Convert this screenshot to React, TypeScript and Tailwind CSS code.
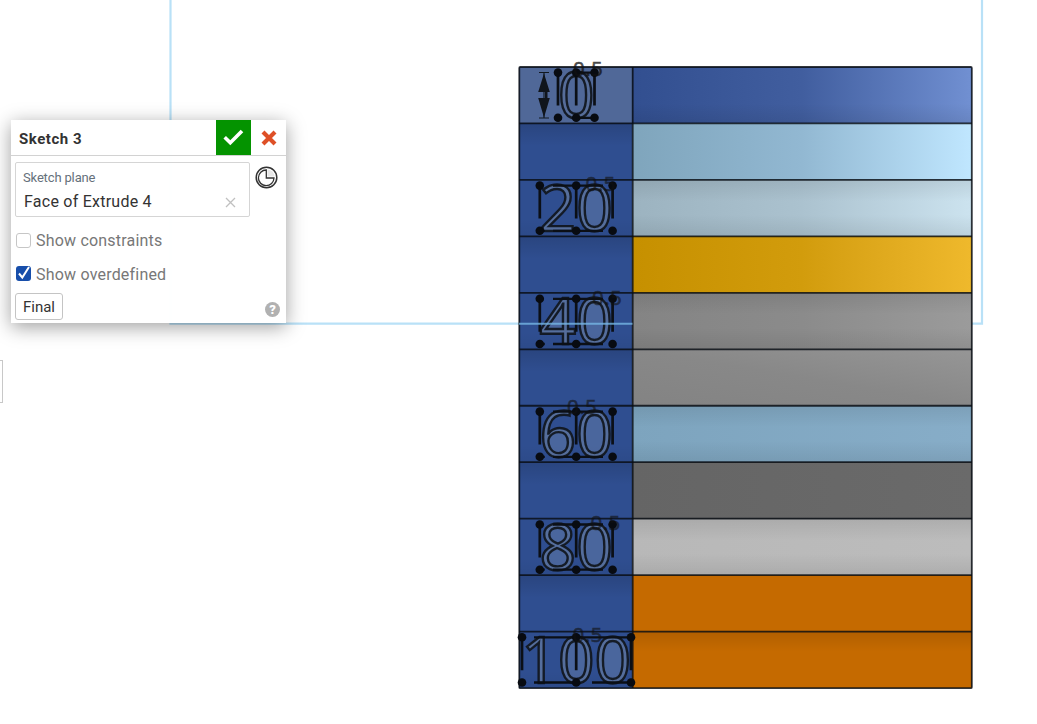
import React from "react";

const rows = [
  { fill: "bg-linear-to-r from-[#324f90] via-[#415e9f] to-[#7190d2]", shade: "bottom", label: "0" },
  { fill: "bg-linear-to-r from-[#7fa5bc] via-[#92b8d2] to-[#c0e7ff]", shade: "none", label: "" },
  { fill: "bg-linear-to-r from-[#9cb3c0] via-[#abc2cf] to-[#cce3ef]", shade: "both", label: "20" },
  { fill: "bg-linear-to-r from-[#c69000] via-[#d29c0c] to-[#efb92c]", shade: "none", label: "" },
  { fill: "bg-linear-to-r from-[#848484] via-[#8b8b8b] to-[#9b9b9b]", shade: "both", label: "40" },
  { fill: "bg-linear-to-tr from-[#838383] via-[#888888] to-[#969696]", shade: "none", label: "" },
  { fill: "bg-linear-to-r from-[#7da4be] to-[#87adc8]", shade: "both", label: "60" },
  { fill: "bg-linear-to-r from-[#656565] to-[#6a6a6a]", shade: "none", label: "" },
  { fill: "bg-linear-to-r from-[#b8b8b8] to-[#bcbcbc]", shade: "both", label: "80" },
  { fill: "bg-[#c56a00]", shade: "none", label: "" },
  { fill: "bg-[#c56a00]", shade: "top", label: "100" },
];

const shades: Record<string, string> = {
  none: "",
  top: "bg-linear-to-b from-black/10 to-transparent to-35%",
  bottom: "bg-linear-to-t from-black/8 to-transparent to-35%",
  both: "bg-[linear-gradient(rgba(0,0,0,0.08),transparent_38%,transparent_62%,rgba(0,0,0,0.08))]",
};

const labels = [
  { text: "0", y: 72.6, left: 558, right: 594.5, dimX: 573, dimY: 76 },
  { text: "20", y: 185.6, left: 539.8, right: 612.6, dimX: 585.5, dimY: 191 },
  { text: "40", y: 298.8, left: 539.8, right: 612.6, dimX: 592, dimY: 304.5 },
  { text: "60", y: 411.6, left: 539.8, right: 612.6, dimX: 567, dimY: 414 },
  { text: "80", y: 524.5, left: 539.8, right: 612.6, dimX: 590.5, dimY: 530 },
  { text: "100", y: 637.3, left: 522, right: 631, dimX: 572.5, dimY: 641.5 },
];

function Counter({ digit, cx, y }: { digit: string; cx: number; y: number }) {
  const fill = { fill: "#8b9fbe", fillOpacity: 0.3 };
  if (digit === "0") return <ellipse cx={cx} cy={y + 22.7} rx="11" ry="20" {...fill} />;
  if (digit === "6") return <ellipse cx={cx + 0.5} cy={y + 31} rx="10" ry="11" {...fill} />;
  if (digit === "4") return <path d={`M${cx + 5} ${y + 7}V${y + 31}H${cx - 12}Z`} {...fill} />;
  if (digit === "8")
    return (
      <g {...fill}>
        <ellipse cx={cx} cy={y + 11} rx="8.5" ry="8.5" />
        <ellipse cx={cx} cy={y + 33.5} rx="9.5" ry="9.5" />
      </g>
    );
  return null;
}

function SketchLabel({ text, y, left, right, dimX, dimY }: (typeof labels)[number]) {
  const mid = 576.2;
  const bottom = y + 45.2;
  const wide = text === "100";
  const single = text === "0";
  return (
    <g>
      {!single &&
        text
          .split("")
          .map((c, i) => <Counter key={i} digit={c} cx={mid + (i - (text.length - 1) / 2) * 36.5} y={y} />)}
      <text
        x={mid}
        y={bottom}
        textAnchor="middle"
        fontFamily="Open Sans"
        fontSize="64"
        fill="#8597ae"
        fillOpacity={single ? 0.12 : 0.45}
        stroke="#10151d"
        strokeOpacity=".93"
        strokeWidth="2.4"
      >
        {text}
      </text>
      <g stroke="#0b0f16" strokeWidth="2.7">
        <path d={`M${left} ${y}V${y + 33}M${mid} ${y}V${y + 33}M${right} ${y}V${y + 33}`} />
        <path
          strokeWidth="2.3"
          d={
            single
              ? `M${mid} ${y}H${right}M${mid} ${bottom}H${right}`
              : wide
                ? `M534 ${y}H631M534 ${bottom}H${mid}M592 ${bottom}H631`
                : `M553 ${y}H603M${left} ${bottom}H${left + 5}M553 ${bottom}H603`
          }
        />
      </g>
      <g fill="#080b11">
        {[left, mid, right].map((x) => (
          <g key={x}>
            <circle cx={x} cy={y} r="4.3" />
            <circle cx={x} cy={bottom} r="4.3" />
          </g>
        ))}
      </g>
      <text
        x={dimX}
        y={dimY}
        fontFamily="Open Sans"
        fontSize="20.5"
        letterSpacing=".5"
        fill="#111"
        stroke="#111"
        strokeWidth=".6"
        opacity={single ? 0.76 : 0.62}
      >
        0.5
      </text>
    </g>
  );
}

function Model() {
  return (
    <div className="absolute top-[66px] left-[518px] h-[623px] w-[455px] p-px">
      <div className="grid h-full grid-cols-[113px_1fr] grid-rows-11">
        {rows.map((r, i) => (
          <React.Fragment key={i}>
            <div className={i === 0 ? "bg-[#506898]" : "bg-[#2f4e90]"}>
              <div
                className={
                  i === 0
                    ? "h-full"
                    : i % 2
                      ? "h-full bg-linear-to-b from-black/12 to-transparent to-40%"
                      : "h-full bg-linear-to-t from-black/5 to-transparent to-30%"
                }
              />
            </div>
            <div className={r.fill}>
              <div className={"h-full " + shades[r.shade]} />
            </div>
          </React.Fragment>
        ))}
      </div>
    </div>
  );
}

function SketchOverlay() {
  return (
    <svg className="pointer-events-none absolute inset-0" width="1037" height="724" fill="none">
      <path d="M170.5 0V323.6H519M982 0V323.6H972" stroke="#b9e1f7" strokeWidth="2.2" />
      <g stroke="#080d13" strokeOpacity=".83" strokeWidth="1.8">
        <rect x="519.3" y="67" width="452.5" height="621.2" rx="1" />
        <path d="M632.7 67V688" />
        {rows.slice(1).map((_, i) => (
          <path key={i} d={`M519 ${67 + (i + 1) * 56.46}H972`} />
        ))}
      </g>
      {labels.map((l) => (
        <SketchLabel key={l.text} {...l} />
      ))}
      <path d="M544 72.5V118M539 72.5H549M539 118H549" stroke="#111820" strokeWidth="1.1" />
      <path d="M544 73.5L549.8 92H538.2ZM544 117.5L538.2 98H549.8ZM545 91H547.5V98H545Z" fill="#10151c" />
      <path d="M519 323.7H632.5" stroke="#75b7e5" strokeOpacity=".8" strokeWidth="2" />
    </svg>
  );
}

function SketchPanel() {
  return (
    <section className="absolute top-[120px] left-[11px] flex h-[203px] w-[275px] flex-col bg-white/98 text-[#333] shadow-[0_4px_18px_rgba(0,0,0,0.38)]">
      <header className="flex h-9 shrink-0 items-stretch border-b border-[#d2d2d2]">
        <h1 className="flex-1 pt-[9px] pl-2 text-[15px] leading-[21px] font-bold tracking-[0.55px]">Sketch 3</h1>
        <button aria-label="Accept" className="flex h-[35px] w-[35px] items-center justify-center bg-[#049300]">
          <svg width="21" height="17" viewBox="0 0 21 17" fill="none">
            <path d="M1.7 8.2L7.3 13.7L19 2" stroke="#fff" strokeWidth="3.6" />
          </svg>
        </button>
        <button aria-label="Cancel" className="flex h-[35px] w-[35px] items-center justify-center">
          <svg width="16" height="16" viewBox="0 0 16 16" fill="none">
            <path d="M2 2L14 14M14 2L2 14" stroke="#de5027" strokeWidth="4.2" />
          </svg>
        </button>
      </header>
      <div className="flex items-start gap-[5px] pt-[6px] pl-1">
        <div className="h-[55px] w-[235px] rounded-[2px] border border-[#d5d5d5] px-[7px] pt-[7px]">
          <div className="text-[13px] leading-4 tracking-[-0.15px] text-[#65707b]">Sketch plane</div>
          <div className="flex items-center justify-between pt-[6px] pr-[6px] pl-px">
            <span className="text-[16px] leading-5 tracking-[0.24px]">Face of Extrude 4</span>
            <svg width="11" height="11" viewBox="0 0 11 11" fill="none">
              <path d="M1 1L10 10M10 1L1 10" stroke="#c0c0c0" strokeWidth="1.3" />
            </svg>
          </div>
        </div>
        <svg className="mt-[4px]" width="23" height="23" viewBox="0 0 23 23" fill="none" stroke="#333">
          <circle cx="11.5" cy="11.5" r="10.3" strokeWidth="1.5" />
          <path d="M12.5 3.5A8 8 0 0 1 19.5 10.5H12.5Z" fill="#e7e7e7" stroke="none" />
          <path d="M11.3 4V12H19A7.8 7.8 0 1 1 11.3 4Z" strokeWidth="1.3" />
        </svg>
      </div>
      <label className="mt-[13px] flex h-5 items-center gap-[6px] pl-[5px] text-[16px] leading-5 tracking-[0.2px] text-[#777]">
        <span className="size-[15px] rounded-[3px] border border-[#c6c6c6] bg-white" />
        <span className="relative top-px -left-px">Show constraints</span>
      </label>
      <label className="mt-[14px] flex h-5 items-center gap-[6px] pl-[5px] text-[16px] leading-5 tracking-[0.2px] text-[#777]">
        <span className="relative -top-px size-[15px] rounded-[3px] bg-[#174eaa]">
          <svg width="15" height="15" viewBox="0 0 15 15" fill="none">
            <path d="M3 7.5L6.3 11.5L13 1" stroke="#fff" strokeWidth="2" />
          </svg>
        </span>
        <span className="relative top-px -left-px">Show overdefined</span>
      </label>
      <div className="mt-[9px] flex items-start justify-between pr-[6px] pl-1">
        <button className="h-[27px] w-12 rounded-[3px] border border-[#c4c4c4] bg-white pt-px text-[15px] leading-[25px]">
          Final
        </button>
        <span className="mt-[9px] flex size-[15px] items-center justify-center rounded-full bg-[#b1b1b1] text-[13px] leading-none font-black text-white">
          ?
        </span>
      </div>
    </section>
  );
}

export default function App() {
  return (
    <main className="relative h-[724px] w-[1037px] overflow-hidden bg-white font-['Roboto',sans-serif]">
      <Model />
      <SketchOverlay />
      <div className="absolute top-[360px] left-0 h-[43px] w-[3px] border border-l-0 border-[#c8c8c8] bg-white" />
      <SketchPanel />
    </main>
  );
}
